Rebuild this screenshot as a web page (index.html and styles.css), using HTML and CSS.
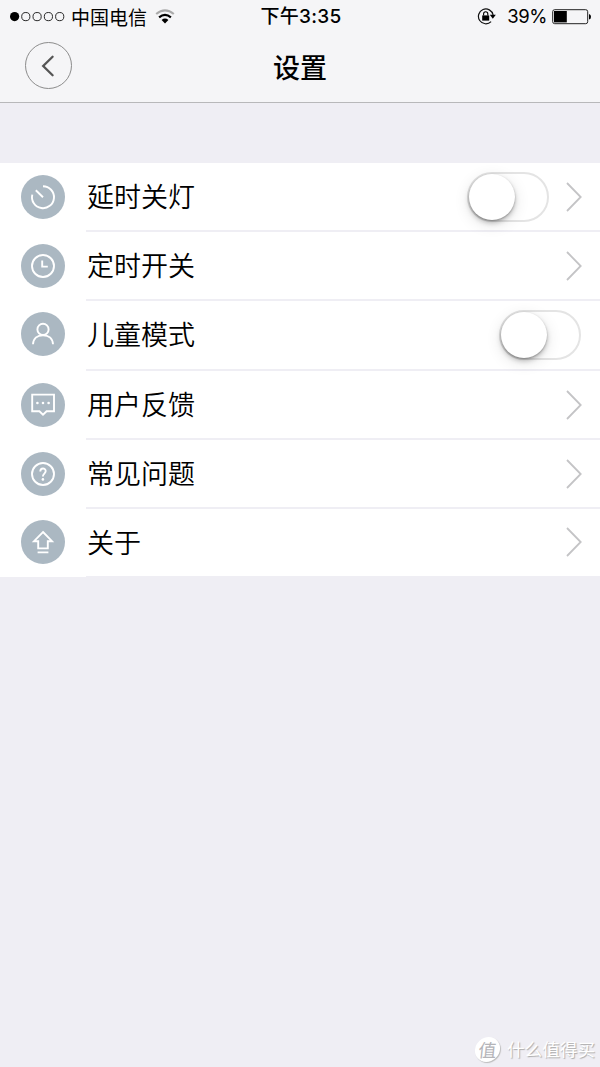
FILE: index.html
```html
<!DOCTYPE html>
<html lang="zh-CN">

<head>
    <meta charset="utf-8">
    <title>设置</title>
    <link rel="stylesheet" href="styles.css">
</head>

<body>
    <header class="header">
        <div class="status-bar">
            <div class="carrier">
                <svg class="signal" width="56" height="12" viewBox="0 0 56 12">
                    <circle cx="4.6" cy="5.6" r="4.6" fill="#000" />
                    <g fill="none" stroke="#111" stroke-width="0.9">
                        <circle cx="15.8" cy="5.6" r="4.1" />
                        <circle cx="27.1" cy="5.6" r="4.1" />
                        <circle cx="38.4" cy="5.6" r="4.1" />
                        <circle cx="49.7" cy="5.6" r="4.1" />
                    </g>
                </svg>
                <span>中国电信</span>
                <svg class="wifi" width="20" height="16" viewBox="0 0 20 16">
                    <g fill="none" stroke-width="2.2">
                        <path d="M1.2 5Q10 -2.2 18.8 5" stroke="#aaa" />
                        <path d="M4.1 8.3Q10 3.3 15.9 8.3" stroke="#000" />
                    </g>
                    <path d="M6.6 10.9Q10 8.2 13.4 10.9L10 14.4Z" />
                </svg>
            </div>
            <div class="time">下午3:35</div>
            <div class="power">
                <svg class="lock" width="20" height="18" viewBox="0 0 20 18">
                    <path d="M14.1 13.6A7.4 7.4 0 1 1 16.1 7" fill="none" stroke="#111" stroke-width="1.2" />
                    <path d="M12.8 6.8H18.8L15.8 10.8Z" />
                    <rect x="5.2" y="7.4" width="7" height="5.2" />
                    <path d="M6.6 7.6V5.8a2.1 2.1 0 0 1 4.2 0V7.6" fill="none" stroke="#000" stroke-width="1.1" />
                </svg>
                <span>39%</span>
                <svg class="battery" width="40" height="16" viewBox="0 0 40 16">
                    <rect x="0.7" y="0.7" width="35" height="14" rx="2" fill="none" stroke="#222" stroke-width="1" />
                    <rect x="2" y="2" width="12.8" height="11.4" />
                    <path d="M37 5Q39 5.4 39 7.8T37 10.6Z" />
                </svg>
            </div>
        </div>
        <div class="nav">
            <a class="back">
                <svg width="14" height="22" viewBox="0 0 14 22">
                    <path d="M11.6 1.8L2.2 11L11.6 20.2" fill="none" stroke="#555" stroke-width="2.3" stroke-linecap="round" />
                </svg>
            </a>
            <h1>设置</h1>
        </div>
    </header>

    <ul class="settings">
        <li class="row">
            <svg class="icon" viewBox="0 0 44 44">
                <circle class="disc" cx="22" cy="22" r="22" />
                <path d="M22 11.2A11 11 0 1 1 11.3 19.6M14.8 15.2L22 22.2" />
            </svg>
            <div class="row-body">
                <span class="label">延时关灯</span>
                <span class="switch"></span>
                <svg class="chevron" viewBox="0 0 16 30"><path d="M1 1L14.7 15L1 29" /></svg>
            </div>
        </li>
        <li class="row">
            <svg class="icon" viewBox="0 0 44 44">
                <circle class="disc" cx="22" cy="22" r="22" />
                <circle cx="22" cy="22" r="11" />
                <path d="M21.2 16.6V22.6H26.8" />
            </svg>
            <div class="row-body">
                <span class="label">定时开关</span>
                <svg class="chevron" viewBox="0 0 16 30"><path d="M1 1L14.7 15L1 29" /></svg>
            </div>
        </li>
        <li class="row row-tall">
            <svg class="icon" viewBox="0 0 44 44">
                <circle class="disc" cx="22" cy="22" r="22" />
                <circle cx="22" cy="17.4" r="5.6" />
                <path d="M12 32.2C12.3 26.3 16.5 23.2 22 23.2S31.7 26.3 32 32.2" />
            </svg>
            <div class="row-body">
                <span class="label">儿童模式</span>
                <span class="switch"></span>
            </div>
        </li>
        <li class="row">
            <svg class="icon" viewBox="0 0 44 44">
                <circle class="disc" cx="22" cy="22" r="22" />
                <path d="M11.2 11.6H33V28.2H25.6L22 31.6L18.4 28.2H11.2Z" />
                <path class="dots" d="M16.4 20H16.41M22 20H22.01M27.6 20H27.61" />
            </svg>
            <div class="row-body">
                <span class="label">用户反馈</span>
                <svg class="chevron" viewBox="0 0 16 30"><path d="M1 1L14.7 15L1 29" /></svg>
            </div>
        </li>
        <li class="row">
            <svg class="icon" viewBox="0 0 44 44">
                <circle class="disc" cx="22" cy="22" r="22" />
                <circle cx="22" cy="22" r="11" />
                <path d="M19.3 19.4C19.3 15.4 24.7 15.6 24.7 19.1C24.7 21.6 21.9 21.6 21.9 24.4" />
                <path class="dots" d="M21.9 27.4H21.91" />
            </svg>
            <div class="row-body">
                <span class="label">常见问题</span>
                <svg class="chevron" viewBox="0 0 16 30"><path d="M1 1L14.7 15L1 29" /></svg>
            </div>
        </li>
        <li class="row row-last">
            <svg class="icon" viewBox="0 0 44 44">
                <circle class="disc" cx="22" cy="22" r="22" />
                <path d="M22 12L31 21.2H26.8V28.4H17.2V21.2H13ZM16.6 32.4H27.4" />
            </svg>
            <div class="row-body">
                <span class="label">关于</span>
                <svg class="chevron" viewBox="0 0 16 30"><path d="M1 1L14.7 15L1 29" /></svg>
            </div>
        </li>
    </ul>

    <footer class="watermark">
        <span class="badge">值</span>
        <span class="brand">什么值得买</span>
    </footer>
</body>

</html>
```
FILE: styles.css
```css
* {
    box-sizing: border-box;
}

body {
    display: flex;
    flex-direction: column;
    height: 1067px;
    margin: 0;
    background-color: #efeef4;
    color: #000;
    font-family: "Noto Sans CJK SC", sans-serif;
    overflow: hidden;
}

svg {
    display: block;
    flex: none;
}

.header {
    height: 103px;
    background-color: #f5f5f7;
    border-bottom: 1px solid #b8b8ba;
}

.status-bar {
    display: grid;
    grid-template-columns: 1fr auto 1fr;
    align-items: center;
    height: 33px;
    padding: 0 8px 0 10px;
    font-size: 19px;
    line-height: 33px;
}

.carrier,
.power {
    display: flex;
    align-items: center;
}

.carrier span {
    margin: 0 8px 0 5px;
}

.time {
    font-family: Inter, "Noto Sans CJK SC", sans-serif;
    font-weight: 500;
    letter-spacing: 0.3px;
}

.power {
    justify-content: flex-end;

    span {
        margin: 0 5px 0 10px;
        font-family: Inter, sans-serif;
        font-size: 18.5px;
        letter-spacing: -0.4px;
    }
}

.nav {
    display: grid;
    grid-template-columns: 47px 1fr 47px;
    align-items: center;
    height: 65px;
    padding: 0 25px;

    h1 {
        margin: 2px 0 0;
        font-size: 27px;
        font-weight: 500;
        line-height: 40px;
        text-align: center;
    }
}

.back {
    display: flex;
    align-items: center;
    justify-content: center;
    width: 47px;
    height: 47px;
    padding-right: 2px;
    border: 1px solid #8c8c8c;
    border-radius: 50%;
}

.settings {
    margin: 60px 0 0;
    padding: 0;
    list-style: none;
}

.row {
    display: flex;
    align-items: center;
    height: 69px;
    padding-left: 21px;
    background-color: #fff;
}

.row-tall {
    height: 70px;

    .icon {
        margin-bottom: 4px;
    }
}

.icon {
    width: 44px;
    height: 44px;
    margin: 0 21px 2px 0;
    fill: none;
    stroke: #fff;
    stroke-width: 1.9;

    .disc {
        fill: #abb8c2;
        stroke: none;
    }

    .dots {
        stroke-width: 2.6;
        stroke-linecap: round;
    }
}

.row-body {
    flex: 1;
    display: flex;
    align-items: center;
    height: 100%;
    padding-right: 19px;
    border-bottom: 2px solid #efeef4;
}

.row-tall .row-body {
    padding-bottom: 1px;
}

.row-last {
    height: 68px;

    .icon {
        margin-bottom: 3px;
    }

    .row-body {
        padding-bottom: 1px;
        border-bottom-width: 1px;
    }
}

.label {
    flex: 1;
    padding: 0 0 1px 1px;
    font-size: 27px;
    font-weight: 350;
    line-height: 40px;
}

.switch {
    display: flex;
    width: 82px;
    height: 50px;
    margin-top: 1px;
    border: 2px solid #e4e4e4;
    border-radius: 25px;
}

.switch::before {
    content: "";
    width: 46px;
    height: 46px;
    border-radius: 50%;
    background-color: #fff;
    box-shadow: 0 3px 5px rgba(0, 0, 0, 0.22), 0 1px 2px rgba(0, 0, 0, 0.25), 0 4px 16px rgba(0, 0, 0, 0.12);
}

.chevron {
    width: 16px;
    height: 30px;
    margin: 0 -1px 0 17px;
    fill: none;
    stroke: #c4c4c6;
    stroke-width: 1.8;
}

.watermark {
    display: flex;
    align-items: center;
    justify-content: flex-end;
    gap: 7px;
    margin-top: auto;
    padding: 0 5px 5px 0;
    color: #fff;
    text-shadow: 1px 1px 1px #aaa;
}

.badge {
    width: 25px;
    height: 25px;
    border-radius: 50%;
    background-color: #fff;
    box-shadow: 1px 1px 1px #bbb;
    color: #b4b4b8;
    font-size: 18px;
    line-height: 24px;
    text-align: center;
    text-shadow: none;
    transform: skewX(-6deg);
}

.brand {
    font-size: 17.6px;
    line-height: 26px;
}
```
